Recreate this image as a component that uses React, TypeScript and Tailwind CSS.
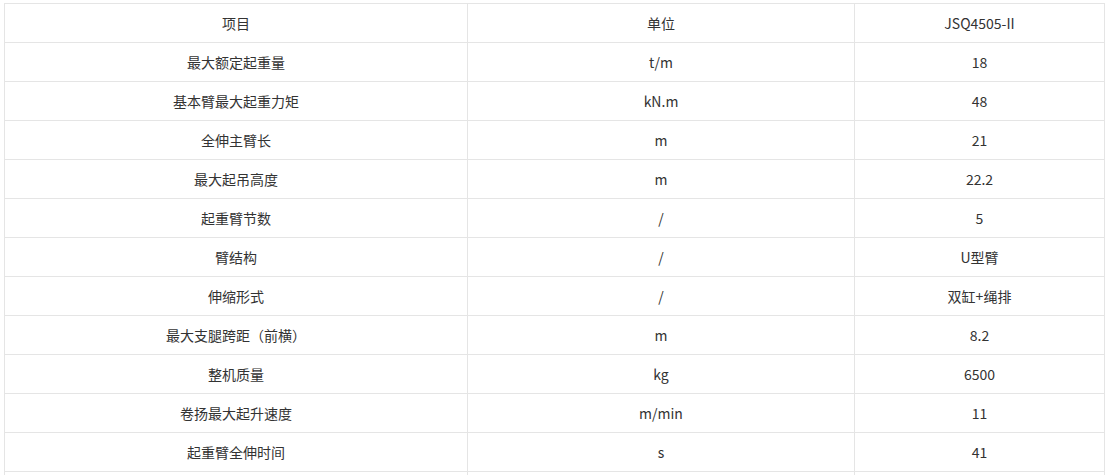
import React from 'react';

const rows: [string, string, string][] = [
    ['项目', '单位', 'JSQ4505-II'],
    ['最大额定起重量', 't/m', '18'],
    ['基本臂最大起重力矩', 'kN.m', '48'],
    ['全伸主臂长', 'm', '21'],
    ['最大起吊高度', 'm', '22.2'],
    ['起重臂节数', '/', '5'],
    ['臂结构', '/', 'U型臂'],
    ['伸缩形式', '/', '双缸+绳排'],
    ['最大支腿跨距（前横）', 'm', '8.2'],
    ['整机质量', 'kg', '6500'],
    ['卷扬最大起升速度', 'm/min', '11'],
    ['起重臂全伸时间', 's', '41'],
];

const App: React.FC = () => {
    return (
        <div
            className="min-h-screen bg-white pt-[3px] pl-[4px] text-[14px] text-[#333]"
            style={{ fontFamily: '"Noto Sans CJK SC", "Noto Sans", sans-serif' }}
        >
            {/* spec table */}
            <div className="w-[1101px] border-l border-t border-[#e5e5e5]">
                {rows.map(([name, unit, value]) => (
                    <div key={name} className="grid grid-cols-[463px_387px_250px]">
                        <div className="h-[39px] flex items-center justify-center border-r border-b border-[#e5e5e5]">{name}</div>
                        <div className="h-[39px] flex items-center justify-center border-r border-b border-[#e5e5e5]">{unit}</div>
                        <div className="h-[39px] flex items-center justify-center border-r border-b border-[#e5e5e5]">{value}</div>
                    </div>
                ))}
                {/* next row, only its top edge shows */}
                <div className="grid grid-cols-[463px_387px_250px]">
                    <div className="h-[39px] border-r border-b border-[#e5e5e5]" />
                    <div className="h-[39px] border-r border-b border-[#e5e5e5]" />
                    <div className="h-[39px] border-r border-b border-[#e5e5e5]" />
                </div>
            </div>
        </div>
    );
};

export default App;
